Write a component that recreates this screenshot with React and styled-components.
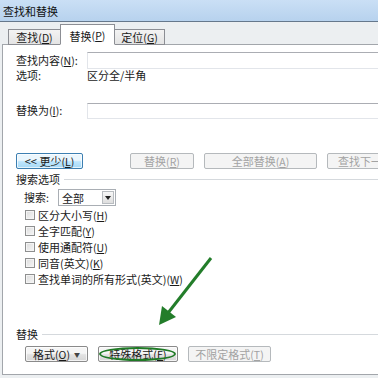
import styled, { createGlobalStyle } from "styled-components";

const GlobalStyle = createGlobalStyle`
    html, body {
        margin: 0;
        padding: 0;
        background: #eceff1;
    }
    body {
        font-family: "Noto Sans CJK SC", "Noto Sans", sans-serif;
        font-size: 11px;
        color: #1a1a1a;
    }
`;

const Window = styled.div`
    position: relative;
    width: 378px;
    height: 378px;
    overflow: hidden;
    background: #eceff1;
`;

const TitleBar = styled.div`
    height: 21px;
    padding-left: 3px;
    display: flex;
    align-items: center;
    background: linear-gradient(#cadff5, #b7d2ee);
    border-bottom: 1px solid #66788c;
    font-size: 11px;
    color: #111;
`;

const Frame = styled.div`
    width: 440px;
    padding-left: 2px;
`;

const TabStrip = styled.div`
    height: 23px;
    display: flex;
    align-items: flex-end;
    padding-left: 6px;
    margin-bottom: -1px;
    position: relative;
    z-index: 1;
`;

const Tab = styled.div`
    box-sizing: border-box;
    height: ${(p) => (p.$active ? "21px" : "16px")};
    width: ${(p) => p.$w}px;
    margin-left: ${(p) => (p.$active ? "-1px" : "0")};
    margin-right: ${(p) => (p.$active ? "-1px" : "0")};
    padding-top: ${(p) => (p.$active ? "2px" : "0")};
    display: flex;
    align-items: center;
    justify-content: center;
    border: 1px solid #8c8e94;
    border-bottom: ${(p) => (p.$active ? "1px solid #fff" : "1px solid #8c8e94")};
    background: ${(p) => (p.$active ? "#fff" : "linear-gradient(#f3f3f3, #e4e4e4)")};
    position: relative;
    z-index: ${(p) => (p.$active ? 2 : 1)};
    font-size: 11px;
    white-space: nowrap;
`;

const Panel = styled.div`
    background: #fff;
    border: 1px solid #a2a6ab;
    border-right: none;
    padding: 7px 0 12px 13px;
    display: flex;
    flex-direction: column;
`;

const Row = styled.div`
    display: flex;
    align-items: center;
    height: ${(p) => p.$h || 16}px;
    margin-top: ${(p) => p.$mt || 0}px;
    padding-left: ${(p) => p.$pl || 0}px;
`;

const Label = styled.div`
    width: ${(p) => p.$w || 71}px;
    flex-shrink: 0;
    white-space: nowrap;
    line-height: 12px;
`;

const Text = styled.div`
    white-space: nowrap;
    line-height: 12px;
    color: ${(p) => (p.$disabled ? "#a3a3a3" : "#1a1a1a")};
`;

const Mn = styled.span`
    font-size: 10.5px;
    u {
        text-decoration: underline;
    }
`;

const Input = styled.div`
    flex: 1;
    box-sizing: border-box;
    height: ${(p) => p.$h || 16}px;
    border: 1px solid #e2e5ea;
    border-top-color: #abadb3;
    background: #fff;
`;

const Button = styled.div`
    position: relative;
    box-sizing: border-box;
    width: ${(p) => p.$w}px;
    height: 16px;
    margin-left: ${(p) => p.$ml || 0}px;
    flex-shrink: 0;
    display: flex;
    align-items: center;
    justify-content: center;
    border-radius: 2px;
    white-space: nowrap;
    font-size: 11px;
    border: 1px solid ${(p) => (p.$focus ? "#3c7fb1" : p.$disabled ? "#b5b9bc" : "#8a8a8a")};
    background: ${(p) =>
        p.$focus
            ? "linear-gradient(#eaf6fd 45%, #bee6fd 55%, #a7d9f5)"
            : p.$disabled
            ? "#f4f4f4"
            : "linear-gradient(#f5f5f5 45%, #e2e2e2 55%, #d6d6d6)"};
    color: ${(p) => (p.$disabled ? "#a3a3a3" : "#1a1a1a")};
    box-shadow: inset 0 0 0 1px ${(p) => (p.$disabled ? "#f4f4f4" : "rgba(255,255,255,0.7)")};
`;

const Ellipse = styled.div`
    position: absolute;
    left: 0;
    right: 1px;
    top: 0;
    bottom: 0;
    border: 2.5px solid #1f7a25;
    border-radius: 50%;
    pointer-events: none;
`;

const Caret = styled.span`
    font-size: 6px;
    margin-left: 4px;
    color: #444;
`;

const GroupHeader = styled.div`
    display: flex;
    align-items: center;
    height: 12px;
    margin-top: ${(p) => p.$mt}px;
    line-height: 12px;

    &::after {
        content: "";
        flex: 1;
        height: 1px;
        margin-left: 4px;
        background: #d5d9dd;
    }
`;

const Select = styled.div`
    box-sizing: border-box;
    width: 58px;
    height: 17px;
    display: flex;
    align-items: center;
    border: 1px solid #a9aeb4;
    padding-left: 3px;
    background: #fff;
`;

const SelectValue = styled.div`
    flex: 1;
    line-height: 12px;
`;

const DropBox = styled.div`
    width: 12px;
    height: 13px;
    margin-right: 1px;
    display: flex;
    align-items: center;
    justify-content: center;
    border: 1px solid #b8bcc0;
    box-sizing: border-box;
    background: linear-gradient(#f7f7f7, #dedede);
`;

const Check = styled.div`
    box-sizing: border-box;
    width: 10px;
    height: 10px;
    margin-right: 3px;
    border: 1px solid #8e8f8f;
    background: linear-gradient(135deg, #dcdcdc, #f6f6f6);
    box-shadow: inset 0 0 0 1px #f4f4f4;
`;

const Arrow = styled.svg`
    position: absolute;
    left: 0;
    top: 0;
    pointer-events: none;
`;

const m = (label, key, suffix = "") => (
    <>
        {label}
        <Mn>
            (<u>{key}</u>)
        </Mn>
        {suffix}
    </>
);

const options = [
    ["区分大小写", "H"],
    ["全字匹配", "Y"],
    ["使用通配符", "U"],
    ["同音(英文)", "K"],
    ["查找单词的所有形式(英文)", "W"],
];

function App() {
    return (
        <Window>
            <GlobalStyle />
            <TitleBar>查找和替换</TitleBar>
            <Frame>
                <TabStrip>
                    <Tab $w={53}>{m("查找", "D")}</Tab>
                    <Tab $w={55} $active>{m("替换", "P")}</Tab>
                    <Tab $w={51}>{m("定位", "G")}</Tab>
                </TabStrip>
                <Panel>
                    <Row $h={17}>
                        <Label>{m("查找内容", "N", ":")}</Label>
                        <Input $h={17} />
                    </Row>
                    <Row $h={12}>
                        <Label>选项:</Label>
                        <Text>区分全/半角</Text>
                    </Row>
                    <Row $mt={21} $h={17}>
                        <Label>{m("替换为", "I", ":")}</Label>
                        <Input $h={16} />
                    </Row>
                    <Row $mt={34}>
                        <Button $w={67} $focus>
                            {"<< "}更少<Mn>(<u>L</u>)</Mn>
                        </Button>
                        <Button $w={64} $ml={47} $disabled>
                            {m("替换", "R")}
                        </Button>
                        <Button $w={113} $ml={10} $disabled>
                            {m("全部替换", "A")}
                        </Button>
                        <Button $w={90} $ml={10} $disabled>
                            {m("查找下一处", "F")}
                        </Button>
                    </Row>
                    <GroupHeader $mt={4}>搜索选项</GroupHeader>
                    <Row $mt={4} $h={17} $pl={8}>
                        <Label $w={34}>
                            搜索<Mn>:</Mn>
                        </Label>
                        <Select>
                            <SelectValue>全部</SelectValue>
                            <DropBox>
                                <svg width="6" height="4" viewBox="0 0 6 4">
                                    <path d="M0 0H6L3 4Z" fill="#222" />
                                </svg>
                            </DropBox>
                        </Select>
                    </Row>
                    {options.map(([label, key], i) => (
                        <Row key={key} $h={16} $mt={i === 0 ? 1 : 0} $pl={9}>
                            <Check />
                            <Text>{m(label, key)}</Text>
                        </Row>
                    ))}
                    <GroupHeader $mt={41}>替换</GroupHeader>
                    <Row $mt={6} $pl={9}>
                        <Button $w={63}>
                            {m("格式", "O")}
                            <Caret>▼</Caret>
                        </Button>
                        <Button $w={80} $ml={10}>
                            {m("特殊格式", "E")}
                            <Ellipse />
                        </Button>
                        <Button $w={83} $ml={10} $disabled>
                            {m("不限定格式", "T")}
                        </Button>
                    </Row>
                </Panel>
            </Frame>
            <Arrow width="378" height="378" viewBox="0 0 378 378">
                <line x1="211" y1="258" x2="168" y2="313" stroke="#237d2a" strokeWidth="3" />
                <path d="M159 325 L162 306 L176 317 Z" fill="#237d2a" />
            </Arrow>
        </Window>
    );
}

export default App;
